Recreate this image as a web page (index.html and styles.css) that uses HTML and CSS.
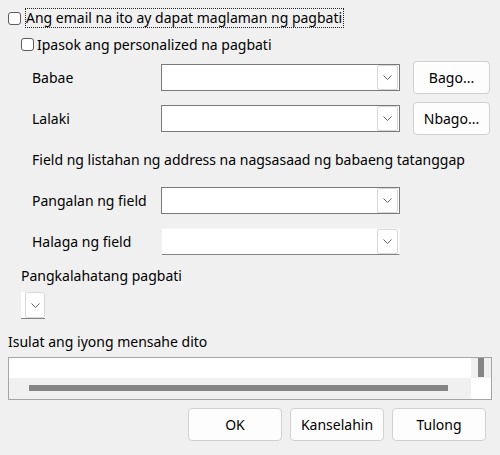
FILE: index.html
```html
<!DOCTYPE html>
<html>
<head>
<meta charset="utf-8">
<link rel="stylesheet" href="styles.css">
</head>
<body>
<div class="dialog">
  <div class="row-check1">
    <span class="cb"></span>
    <span class="focus-label">Ang email na ito ay dapat maglaman ng pagbati</span>
  </div>
  <div class="row-check2">
    <span class="cb"></span>
    <span class="cb-text">Ipasok ang personalized na pagbati</span>
  </div>

  <div class="form">
    <div class="frow frow-btn">
      <span class="flabel">Babae</span>
      <div class="combo"><span class="combo-btn"><svg width="9" height="5" viewBox="0 0 9 5"><path d="M0.5 0.5 L4.5 4.5 L8.5 0.5" fill="none" stroke="#666" stroke-width="1"/></svg></span></div>
      <button class="btn side-btn">Bago...</button>
    </div>
    <div class="frow frow-btn second">
      <span class="flabel">Lalaki</span>
      <div class="combo"><span class="combo-btn"><svg width="9" height="5" viewBox="0 0 9 5"><path d="M0.5 0.5 L4.5 4.5 L8.5 0.5" fill="none" stroke="#666" stroke-width="1"/></svg></span></div>
      <button class="btn side-btn">Nbago...</button>
    </div>
    <div class="field-text">Field ng listahan ng address na nagsasaad ng babaeng tatanggap</div>
    <div class="frow pangalan">
      <span class="flabel">Pangalan ng field</span>
      <div class="combo"><span class="combo-btn"><svg width="9" height="5" viewBox="0 0 9 5"><path d="M0.5 0.5 L4.5 4.5 L8.5 0.5" fill="none" stroke="#666" stroke-width="1"/></svg></span></div>
    </div>
    <div class="frow halaga">
      <span class="flabel">Halaga ng field</span>
      <div class="combo flat"><span class="combo-btn"><svg width="9" height="5" viewBox="0 0 9 5"><path d="M0.5 0.5 L4.5 4.5 L8.5 0.5" fill="none" stroke="#666" stroke-width="1"/></svg></span></div>
    </div>
  </div>

  <div class="general-label">Pangkalahatang pagbati</div>
  <div class="small-combo"><span class="combo-btn"><svg width="9" height="5" viewBox="0 0 9 5"><path d="M0.5 0.5 L4.5 4.5 L8.5 0.5" fill="none" stroke="#666" stroke-width="1"/></svg></span></div>

  <div class="msg-label">Isulat ang iyong mensahe dito</div>
  <div class="textarea">
    <div class="ta-content"></div>
    <div class="ta-vscroll"><span class="vthumb"></span></div>
    <div class="ta-hscroll"><span class="hthumb"></span></div>
    <div class="ta-corner"></div>
  </div>

  <div class="footer">
    <button class="btn foot-btn">OK</button>
    <button class="btn foot-btn">Kanselahin</button>
    <button class="btn foot-btn">Tulong</button>
  </div>
</div>
</body>
</html>
```

FILE: styles.css
```css
* { box-sizing: border-box; }
html, body {
  margin: 0;
  padding: 0;
  background: #f0f0f0;
}
body {
  font-family: "Noto Sans", "DejaVu Sans", sans-serif;
  font-size: 14px;
  color: #000;
  width: 500px;
  height: 455px;
  overflow: hidden;
}
.dialog {
  padding-top: 8px;
}
.cb {
  display: inline-block;
  width: 13px;
  height: 13px;
  border: 1px solid #5c5c5c;
  border-radius: 3px;
  background: #fff;
  flex: none;
}
.row-check1 {
  display: flex;
  align-items: center;
  height: 20px;
  padding-left: 8px;
}
.focus-label {
  margin-left: 4px;
  border: 1px dotted #222;
  height: 20px;
  line-height: 18px;
  padding: 0 1px 0 0;
  white-space: nowrap;
}
.row-check2 {
  display: flex;
  align-items: center;
  height: 16px;
  margin-top: 8px;
  padding-left: 21px;
}
.cb-text {
  margin-left: 3px;
  white-space: nowrap;
}
.form {
  margin-top: 9px;
  padding-left: 32px;
}
.frow {
  display: grid;
  grid-template-columns: 129px 239px 90px;
  align-items: center;
}
.frow-btn { height: 33px; }
.frow.second { margin-top: 8px; }
.flabel { white-space: nowrap; }
.combo {
  height: 27px;
  background: #fff;
  border: 1px solid #7a7a7a;
  display: flex;
  justify-content: flex-end;
  align-items: stretch;
  padding: 0 1px 0 0;
}
.combo.flat {
  border: 1px solid #f6f6f6;
  border-bottom-color: #858585;
  border-left: none;
  margin-left: 1px;
}
.combo-btn {
  width: 21px;
  border: 1px solid #d8d8d8;
  border-radius: 2px;
  background: #fff;
  display: flex;
  align-items: center;
  justify-content: center;
}
.btn {
  font-family: inherit;
  font-size: 14px;
  color: #000;
  background: #fdfdfd;
  border: 1px solid #d0d0d0;
  border-radius: 4px;
  padding: 0;
}
.side-btn {
  height: 33px;
  margin-left: 13px;
}
.field-text {
  margin-top: 15px;
  height: 20px;
  line-height: 20px;
  white-space: nowrap;
}
.pangalan {
  margin-top: 17px;
  height: 27px;
}
.halaga {
  margin-top: 14px;
  height: 27px;
}
.general-label {
  margin-top: 11px;
  padding-left: 21px;
  height: 20px;
  line-height: 20px;
}
.small-combo {
  margin-top: 6px;
  margin-left: 21px;
  width: 24px;
  height: 27px;
  background: #fff;
  border-bottom: 1px solid #858585;
  display: flex;
  justify-content: flex-end;
}
.small-combo .combo-btn {
  width: 20px;
}
.msg-label {
  margin-top: 13px;
  padding-left: 8px;
  height: 20px;
  line-height: 20px;
}
.textarea {
  margin: 5px 0 0 8px;
  width: 484px;
  height: 43px;
  border: 1px solid #a5a5a5;
  display: grid;
  grid-template-columns: 462px 20px;
  grid-template-rows: 20px 21px;
}
.ta-content { background: #fff; }
.ta-vscroll {
  background: #f0f0f0;
  position: relative;
}
.vthumb {
  position: absolute;
  left: 7px;
  top: 0;
  width: 6px;
  height: 19px;
  background: #858585;
}
.ta-hscroll {
  background: #f0f0f0;
  position: relative;
}
.hthumb {
  position: absolute;
  left: 20px;
  top: 7px;
  width: 419px;
  height: 6px;
  background: #858585;
}
.ta-corner { background: #fff; }
.footer {
  margin-top: 8px;
  display: flex;
  justify-content: flex-end;
  gap: 8px;
  padding-right: 14px;
}
.foot-btn {
  width: 94px;
  height: 33px;
}
```
